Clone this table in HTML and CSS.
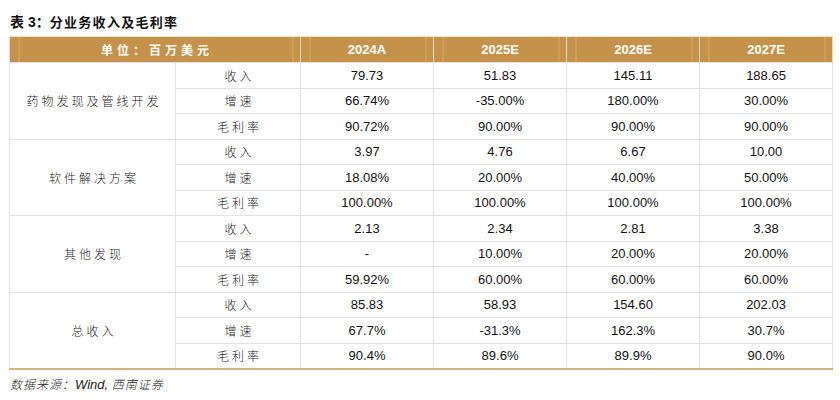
FILE: index.html
```html
<!DOCTYPE html>
<html lang="zh">
<head>
<meta charset="utf-8">
<link rel="stylesheet" href="styles.css">
</head>
<body>
<div class="page">
  <div class="title"><span class="t-lbl">表 3：</span>分业务收入及毛利率</div>
  <table class="tbl">
    <colgroup>
      <col class="c1"><col class="c2"><col class="cy"><col class="cy"><col class="cy"><col class="cy">
    </colgroup>
    <thead>
      <tr>
        <th colspan="2" class="unit">单位：百万美元</th>
        <th>2024A</th><th>2025E</th><th>2026E</th><th>2027E</th>
      </tr>
    </thead>
    <tbody>
      <tr><td rowspan="3" class="seg">药物发现及管线开发</td><td class="lbl">收入</td><td>79.73</td><td>51.83</td><td>145.11</td><td>188.65</td></tr>
      <tr><td class="lbl">增速</td><td>66.74%</td><td>-35.00%</td><td>180.00%</td><td>30.00%</td></tr>
      <tr><td class="lbl">毛利率</td><td>90.72%</td><td>90.00%</td><td>90.00%</td><td>90.00%</td></tr>
      <tr><td rowspan="3" class="seg">软件解决方案</td><td class="lbl">收入</td><td>3.97</td><td>4.76</td><td>6.67</td><td>10.00</td></tr>
      <tr><td class="lbl">增速</td><td>18.08%</td><td>20.00%</td><td>40.00%</td><td>50.00%</td></tr>
      <tr><td class="lbl">毛利率</td><td>100.00%</td><td>100.00%</td><td>100.00%</td><td>100.00%</td></tr>
      <tr><td rowspan="3" class="seg">其他发现</td><td class="lbl">收入</td><td>2.13</td><td>2.34</td><td>2.81</td><td>3.38</td></tr>
      <tr><td class="lbl">增速</td><td>-</td><td>10.00%</td><td>20.00%</td><td>20.00%</td></tr>
      <tr><td class="lbl">毛利率</td><td>59.92%</td><td>60.00%</td><td>60.00%</td><td>60.00%</td></tr>
      <tr class="last"><td rowspan="3" class="seg">总收入</td><td class="lbl">收入</td><td>85.83</td><td>58.93</td><td>154.60</td><td>202.03</td></tr>
      <tr class="last"><td class="lbl">增速</td><td>67.7%</td><td>-31.3%</td><td>162.3%</td><td>30.7%</td></tr>
      <tr class="last end"><td class="lbl">毛利率</td><td>90.4%</td><td>89.6%</td><td>89.9%</td><td>90.0%</td></tr>
    </tbody>
  </table>
  <div class="source">数据来源：<span class="en">Wind, </span>西南证券</div>
</div>
</body>
</html>
```

FILE: styles.css
```css
html, body {
  margin: 0;
  padding: 0;
  background: #ffffff;
}

.page {
  width: 824px;
  padding: 12px 0 0 9px;
  font-family: "Liberation Sans", Arial, "Noto Sans CJK SC", sans-serif;
  color: #111;
}

.title {
  font-family: "Noto Sans CJK SC", sans-serif;
  font-weight: 700;
  font-size: 13px;
  letter-spacing: 1.3px;
  line-height: 20px;
  height: 24px;
  padding-left: 1px;
  color: #111;
}

.t-lbl {
  font-family: "Liberation Sans", "Noto Sans CJK SC", sans-serif;
  font-size: 14px;
  letter-spacing: 0;
}

.tbl {
  width: 824px;
  border-collapse: collapse;
  table-layout: fixed;
}

.c1 { width: 166px; }
.c2 { width: 125px; }
.cy { width: 133px; }

.tbl th {
  height: 25px;
  padding: 0;
  background-color: #c4924a;
  background-image: linear-gradient(to right,
    transparent 8px, #d3a966 8px, #d3a966 9px, transparent 9px,
    transparent calc(100% - 8px), #d3a966 calc(100% - 8px), #d3a966 calc(100% - 7px), transparent calc(100% - 7px));
  color: #ffffff;
  font-weight: 700;
  font-size: 13px;
  text-align: center;
  border-top: 1px solid #f1e3cc;
  border-left: 1px solid #e9dac2;
  border-right: 1px solid #e9dac2;
  border-bottom: 0;
}

.tbl th.unit {
  font-family: "Noto Sans CJK SC", sans-serif;
  font-size: 12px;
  font-weight: 700;
  letter-spacing: 4px;
  text-indent: 4px;
}

.tbl td {
  height: 24.5px;
  padding: 0;
  text-align: center;
  font-size: 13px;
  color: #111;
  border: 1px solid #e2e2e2;
}

.tbl td.seg,
.tbl td.lbl {
  font-family: "Noto Sans CJK SC", sans-serif;
  font-weight: 300;
  font-size: 12px;
  letter-spacing: 3px;
  text-indent: 3px;
  color: #222;
}

.tbl tr.end td,
.tbl tr.last td.seg {
  border-bottom: 2px solid #d8b27c;
}

.source {
  font-family: "Noto Sans CJK SC", sans-serif;
  font-style: italic;
  font-weight: 300;
  font-size: 12px;
  color: #222;
  line-height: 16px;
  padding-top: 6px;
  padding-left: 1px;
  letter-spacing: 1px;
}

.source .en {
  font-family: "Liberation Sans", sans-serif;
  font-weight: 400;
  font-size: 13px;
  letter-spacing: 0;
  white-space: pre;
}
```
